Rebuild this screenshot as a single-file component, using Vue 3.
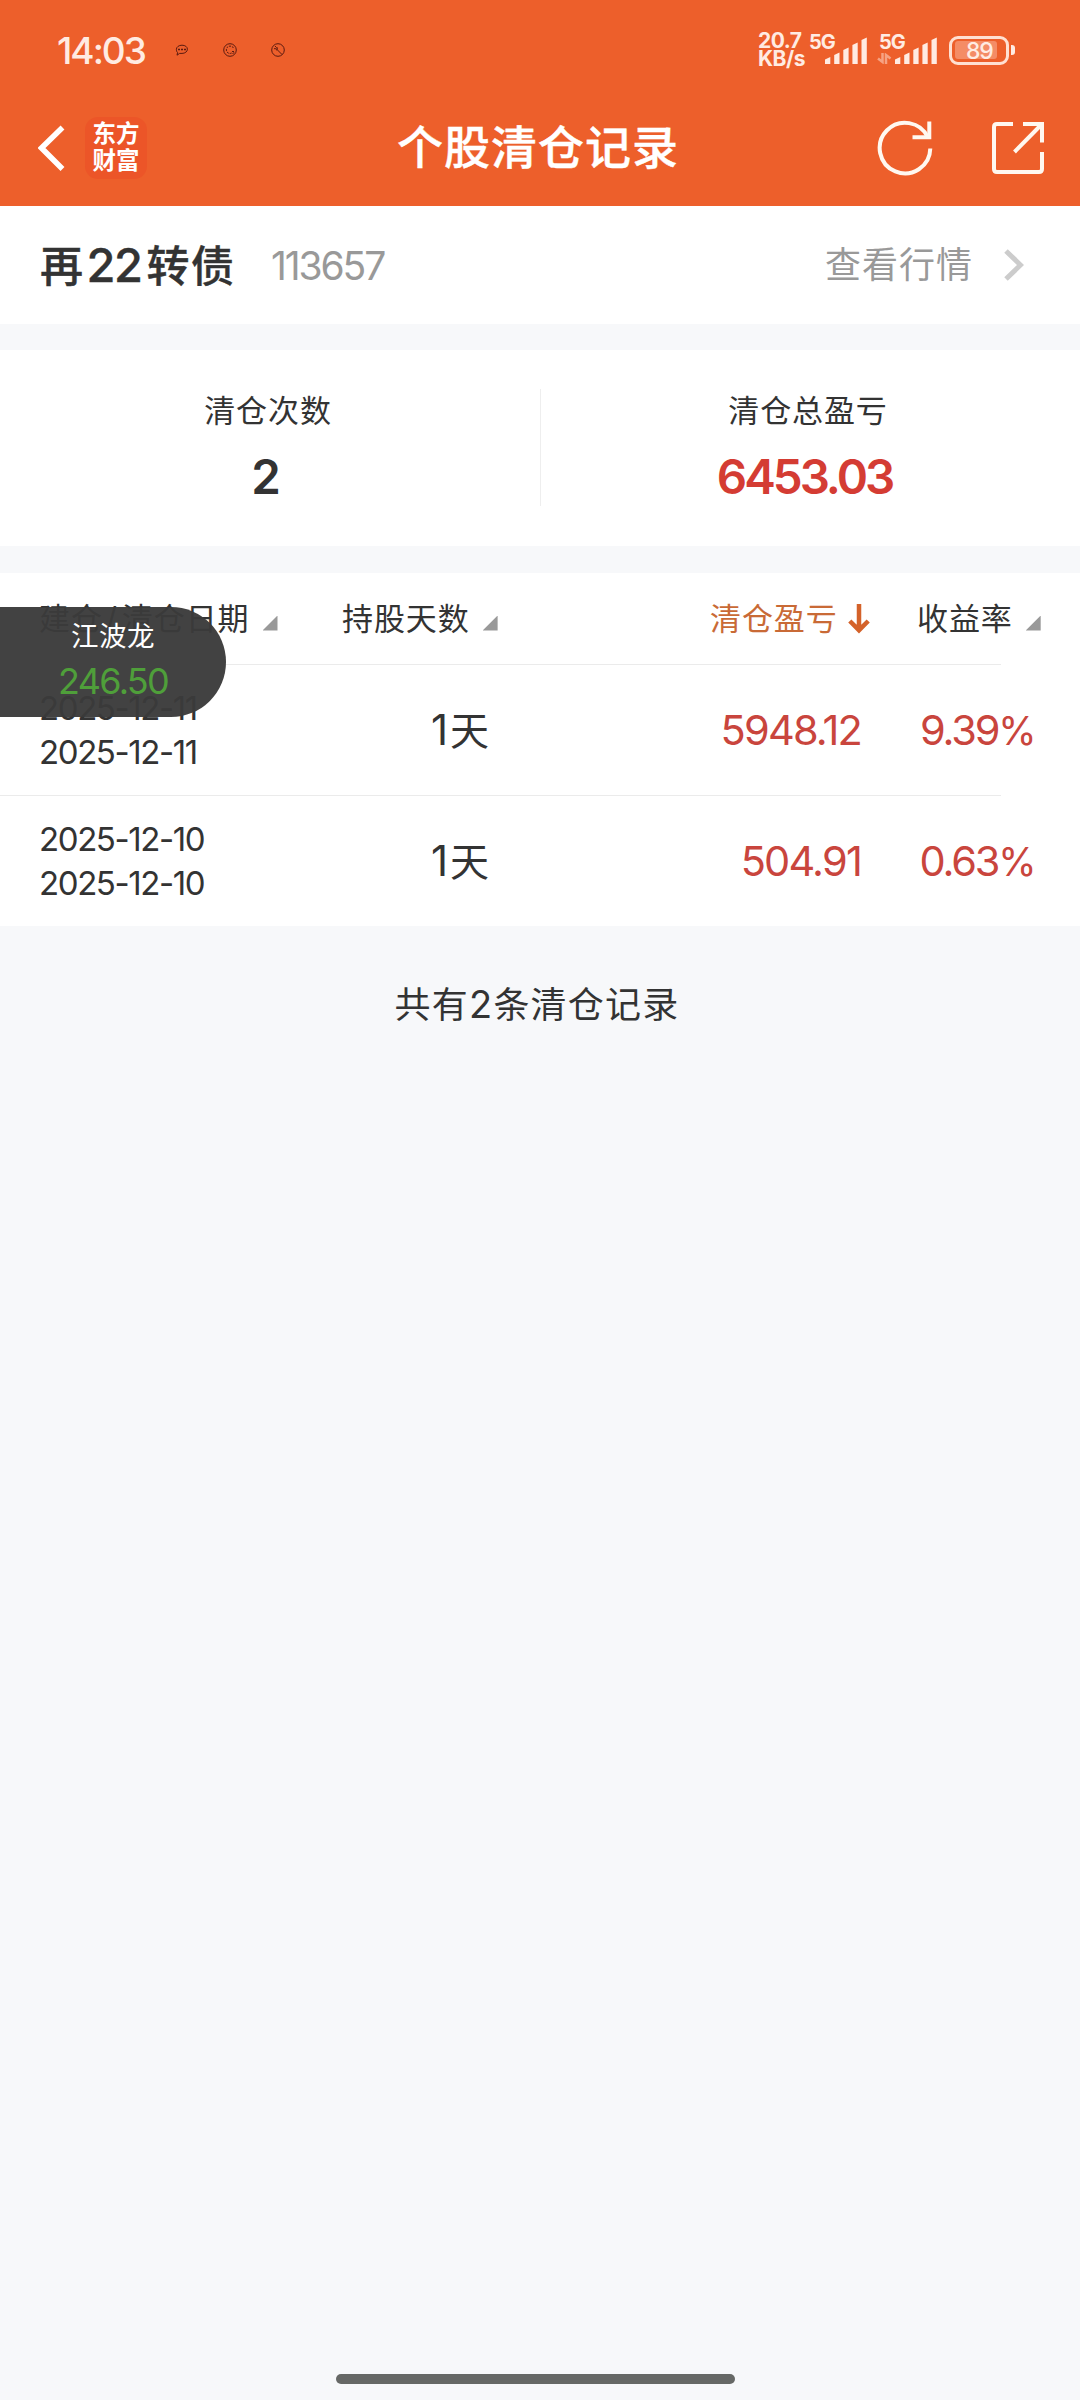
<script setup>
const bars = [
  { x: 0, h: 7 },
  { x: 9.2, h: 11.5 },
  { x: 18.3, h: 16.5 },
  { x: 27.4, h: 21.5 },
  { x: 36.5, h: 26.5 },
]

const records = [
  { open: '2025-12-11', close: '2025-12-11', days: 1, profit: '5948.12', rate: '9.39' },
  { open: '2025-12-10', close: '2025-12-10', days: 1, profit: '504.91', rate: '0.63' },
]
</script>

<template>
  <div class="screen">
    <header class="top">
      <div class="status">
        <span class="clock">14:03</span>
        <div class="notices">
          <svg width="14" height="14" viewBox="0 0 14 14" class="notice">
            <path d="M7 2.2c3.2 0 5.4 1.7 5.4 4s-2.2 4.2-5.4 4.2H4.6L2 12.2l.6-2.6C1.6 8.7 1.4 7.6 1.4 6.3 1.4 4 3.8 2.2 7 2.2z" />
            <path d="M3 6.5h2M6 6.5h2M9 6.5h2M4 5.5v2M7 5.5v2M10 5.5v2" />
          </svg>
          <svg width="14" height="14" viewBox="0 0 14 14" class="notice">
            <circle cx="7" cy="7" r="6.3" />
            <path d="M10.5 5C9.5 3 6 2.3 4.2 4.4 2.8 6 3.2 8.8 5 9.9c1.5.9 3.2.6 4.2-.2M9 8.5h3M9.5 10.5l2-1" stroke-dasharray="2 1" />
          </svg>
          <svg width="14" height="14" viewBox="0 0 14 14" class="notice">
            <circle cx="7" cy="7" r="6.3" />
            <path d="M4 3l1.500 1.500-1 1.500L3 5.500M6.500 4.500L6 6.500l5 5M5 7l1.500-.5" />
          </svg>
        </div>
        <div class="status-right">
          <div class="speed"><span>20.7</span><span>KB/s</span></div>
          <div class="cell">
            <span class="net">5G</span>
            <svg class="bars" width="42" height="27" viewBox="0 0 42 27">
              <path v-for="b in bars" :key="b.x" :d="`M${b.x} 27v${-(b.h - 2.5)}l5.3 -2.5v${b.h}z`" />
            </svg>
          </div>
          <div class="cell">
            <span class="net">5G</span>
            <svg class="traffic" width="15" height="11" viewBox="0 0 15 11">
              <path d="M5.500 0v9L1 5.500M9 11V2l4.500 3.500" />
            </svg>
            <svg class="bars" width="42" height="27" viewBox="0 0 42 27">
              <path v-for="b in bars" :key="b.x" :d="`M${b.x} 27v${-(b.h - 2.5)}l5.3 -2.5v${b.h}z`" />
            </svg>
          </div>
          <div class="battery"><span class="charge">89</span></div>
          <i class="tip"></i>
        </div>
      </div>
      <div class="nav">
        <svg class="back" width="28" height="48" viewBox="0 0 28 48">
          <path d="M24.500 3.500L3.500 24l21 21" />
        </svg>
        <div class="logo"><span>东方</span><span>财富</span></div>
        <h1>个股清仓记录</h1>
        <svg class="refresh" width="56" height="56" viewBox="0 0 56 56">
          <path d="M53.300 28.500A25.300 25.300 0 1 1 51 17.500" />
          <path d="M52.300 1.500V17.300H35.500" />
        </svg>
        <svg class="share" width="52" height="52" viewBox="0 0 52 52">
          <path d="M21 2H5Q2 2 2 5V47Q2 50 5 50H47Q50 50 50 47V30" />
          <path d="M31 2H50V20.500M22.500 30L49 3" />
        </svg>
      </div>
    </header>

    <section class="stock">
      <div class="name">再<span>22</span>转债</div>
      <span class="code">113657</span>
      <span class="quote">查看行情</span>
      <svg class="chevron" width="20" height="32" viewBox="0 0 20 32">
        <path d="M2 2L16.500 16 2 30" />
      </svg>
    </section>

    <section class="summary">
      <div class="stat">
        <span class="label">清仓次数</span>
        <span class="figure">2</span>
      </div>
      <div class="stat">
        <span class="label">清仓总盈亏</span>
        <span class="figure red">6453.03</span>
      </div>
    </section>

    <section class="list">
      <div class="row head">
        <div class="th">建仓<span class="slash">/</span>清仓日期<i class="tri"></i></div>
        <div class="th">持股天数<i class="tri"></i></div>
        <div class="th active">
          清仓盈亏
          <svg width="22" height="30" viewBox="0 0 22 30"><path d="M11 0V26M1.800 17L11 26.200 20.200 17" /></svg>
        </div>
        <div class="th">收益率<i class="tri"></i></div>
      </div>
      <div v-for="r in records" :key="r.open" class="row">
        <div class="dates"><span>{{ r.open }}</span><span>{{ r.close }}</span></div>
        <div class="days"><span>{{ r.days }}</span>天</div>
        <div class="num">{{ r.profit }}</div>
        <div class="num rate">{{ r.rate }}<span>%</span></div>
      </div>
      <div class="float">
        <span class="float-name">江波龙</span>
        <span class="float-price">246.50</span>
      </div>
    </section>

    <p class="total">共有<span>2</span>条清仓记录</p>
    <div class="home"></div>
  </div>
</template>

<style>
body {
  background: #f7f8fa;
}
</style>

<style scoped>
.screen {
  display: flex;
  flex-direction: column;
  width: 1080px;
  height: 2400px;
  overflow: hidden;
  background: #f7f8fa;
  color: #333;
  font-family: Inter, "Noto Sans CJK SC", sans-serif;
}
svg {
  display: block;
  flex: none;
  fill: none;
}
.top {
  height: 206px;
  background: #ed5f2b;
  color: #fff;
}
.status {
  display: flex;
  align-items: center;
  height: 100px;
  padding-left: 57px;
  color: #ffebe2;
}
.clock {
  width: 118px;
  font-size: 37px;
  font-weight: 500;
  letter-spacing: -2px;
}
.notices {
  display: flex;
  gap: 34px;
}
.notice {
  stroke: #5a1a10;
  stroke-width: 1;
}
.status-right {
  display: flex;
  align-items: center;
  margin-left: auto;
  padding-right: 65px;
}
.speed {
  display: flex;
  flex-direction: column;
  width: 51px;
  font-size: 21px;
  font-weight: 700;
  line-height: 18px;
  letter-spacing: -0.5px;
}
.cell {
  display: flex;
  position: relative;
  justify-content: flex-end;
  width: 58px;
  margin-right: 12px;
}
.net {
  position: absolute;
  left: 0;
  top: -4px;
  font-size: 20px;
  font-weight: 700;
  line-height: 18px;
  letter-spacing: -1px;
}
.bars path {
  fill: #ffebe2;
}
.traffic {
  position: absolute;
  left: -2px;
  bottom: 0;
  stroke: #f6a283;
  stroke-width: 2.5;
}
.battery {
  display: flex;
  align-items: center;
  box-sizing: border-box;
  width: 60px;
  height: 29px;
  padding: 0 3px;
  border: 3px solid #ffe0d2;
  border-radius: 9px;
}
.charge {
  width: 42px;
  height: 18px;
  box-sizing: border-box;
  padding-left: 11px;
  border-radius: 3px;
  background: #f48c66;
  color: #ffebe2;
  font-size: 23px;
  font-weight: 500;
  line-height: 20px;
  letter-spacing: -1.2px;
}
.tip {
  width: 4px;
  height: 10px;
  margin-left: 2px;
  border-radius: 0 3px 3px 0;
  background: #ffebe2;
}
.nav {
  display: flex;
  align-items: center;
  height: 95px;
  padding: 0 34px 0 38px;
}
.back {
  stroke: #fff;
  stroke-width: 5.5;
}
.logo {
  display: flex;
  flex-direction: column;
  align-items: center;
  justify-content: center;
  width: 62px;
  height: 62px;
  margin-left: 19px;
  border-radius: 13px;
  background: #ec5528;
  font-size: 23.5px;
  font-weight: 700;
  line-height: 26.5px;
}
h1 {
  margin: 0 0 0 250px;
  padding-bottom: 2px;
  width: 480px;
  font-size: 46px;
  font-weight: 500;
  letter-spacing: 1px;
  line-height: 60px;
  white-space: nowrap;
  -webkit-text-stroke: 0.4px currentColor;
}
.refresh,
.share {
  stroke: #fff8f0;
  stroke-width: 4;
}
.share {
  margin-left: 59px;
}
.stock {
  display: flex;
  align-items: center;
  height: 118px;
  padding: 0 56px 0 40px;
  background: #fff;
}
.name {
  width: 231px;
  font-size: 43px;
  font-weight: 500;
  letter-spacing: 1.5px;
  line-height: 60px;
  white-space: nowrap;
  -webkit-text-stroke: 0.4px currentColor;
}
.name span {
  margin: 0 5px 0 2px;
  font-size: 47px;
  font-weight: 500;
  letter-spacing: -1.5px;
}
.code {
  color: #999;
  font-size: 39px;
  letter-spacing: -2.1px;
}
.quote {
  margin-left: auto;
  color: #999;
  font-size: 36px;
  letter-spacing: 1px;
  line-height: 50px;
}
.chevron {
  margin-left: 31px;
  stroke: #ccc;
  stroke-width: 5;
}
.summary {
  display: flex;
  height: 196px;
  margin: 26px 0 27px;
  background: #fff;
}
.stat {
  display: flex;
  position: relative;
  flex: 1;
  flex-direction: column;
  align-items: center;
  padding-top: 41px;
  padding-right: 4px;
}
.stat + .stat::before {
  content: "";
  position: absolute;
  left: 0;
  top: 39px;
  width: 1px;
  height: 117px;
  background: #eee;
}
.label {
  font-size: 31px;
  line-height: 40px;
  letter-spacing: 0.9px;
}
.figure {
  margin-top: 21px;
  padding-right: 7px;
  font-size: 47.5px;
  font-weight: 600;
  line-height: 50px;
  letter-spacing: -3px;
}
.red {
  color: #d43c33;
}
.list {
  position: relative;
  height: 353px;
  background: #fff;
}
.row {
  display: grid;
  position: relative;
  grid-template-columns: 303px 368px 207px 163px;
  align-items: center;
  height: 130px;
  padding-left: 39px;
}
.row + .row {
  margin-top: 1px;
}
.row + .row::before {
  content: "";
  position: absolute;
  left: 0;
  top: -1px;
  width: 1001px;
  height: 1px;
  background: #ebebeb;
}
.head {
  height: 91px;
}
.th {
  display: flex;
  align-items: center;
  font-size: 31px;
  letter-spacing: 0.9px;
  line-height: 40px;
  white-space: nowrap;
}
.slash {
  margin: 0 4px 0 3px;
}
.tri {
  width: 15px;
  height: 15px;
  margin: 9px 0 0 13px;
  background: #999;
  clip-path: polygon(100% 0, 100% 100%, 0 100%);
}
.active {
  color: #c96a36;
}
.active svg {
  margin-left: 10px;
  stroke: #d4622a;
  stroke-width: 4.5;
}
.dates {
  display: flex;
  flex-direction: column;
  font-size: 33px;
  line-height: 44px;
  letter-spacing: -1.4px;
}
.days {
  padding: 0 0 0 89px;
  font-size: 39px;
  line-height: 50px;
}
.days span {
  margin-right: 2px;
  font-size: 42px;
}
.num {
  margin-right: 56px;
  color: #c9453d;
  font-size: 41.5px;
  letter-spacing: -1.8px;
  text-align: right;
}
.rate {
  margin-right: 46px;
  letter-spacing: -2.2px;
}
.rate span {
  font-size: 39px;
  letter-spacing: -2.5px;
}
.float {
  display: flex;
  position: absolute;
  left: 0;
  top: 34px;
  flex-direction: column;
  align-items: center;
  box-sizing: border-box;
  width: 226px;
  height: 110px;
  padding: 9px 0 0;
  border-radius: 0 55px 55px 0;
  background: rgba(58, 58, 58, 0.96);
}
.float-name {
  color: #fff;
  font-size: 27.5px;
  line-height: 40px;
  letter-spacing: 0.5px;
}
.float-price {
  margin-top: 5px;
  color: #4f9f3a;
  font-size: 36px;
  line-height: 40px;
  letter-spacing: -1.7px;
}
.total {
  margin: 53px 0 0;
  padding-right: 6px;
  font-size: 36px;
  line-height: 50px;
  letter-spacing: 1.2px;
  text-align: center;
}
.total span {
  font-size: 38px;
}
.home {
  width: 399px;
  height: 10px;
  margin: auto auto 16px 336px;
  border-radius: 5px;
  background: #666866;
}
</style>
